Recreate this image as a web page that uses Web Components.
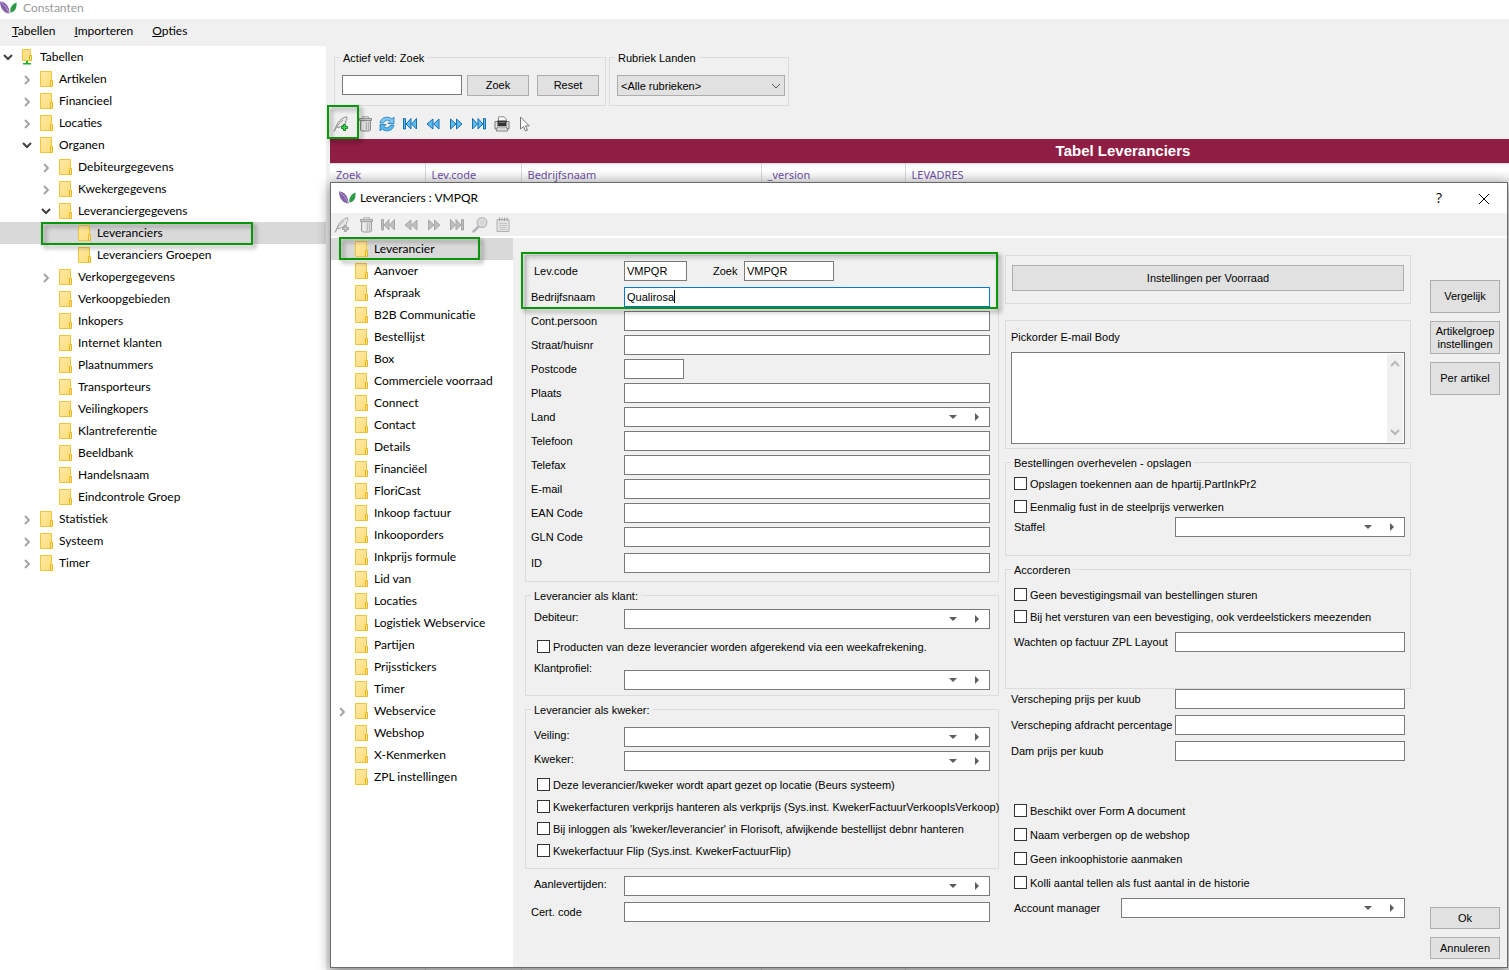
<!DOCTYPE html>
<html lang="nl">
<head>
<meta charset="utf-8">
<title>Constanten</title>
<style>
  html, body { margin: 0; height: 100%; }
  body {
    overflow: hidden;
    color: #000;
    background: #f0f0f0;
    --ui-font: Lato, "Open Sans", sans-serif;
    --form-font: "Liberation Sans", Arial, sans-serif;
    font: 12px/16px var(--ui-font);
  }
</style>
</head>
<body>
<constants-app></constants-app>

<script>
const icons = {
  logo: `<svg width="17" height="14" viewBox="0 0 17 14"><path d="M0 .5C5 .5 9.500 5 9.500 12.500C4 12.500 0 7 0 .5Z" fill="#8561a8"/><path d="M.5 1C5 4 7.500 8 9 12" stroke="#b79fd0" fill="none"/><path d="M16.500 1.500C12 3 9.500 7 10.500 11.500C15 11 17 7 16.500 1.500Z" fill="#2f9a48"/></svg>`,
  folder: `<svg width="14" height="18" viewBox="0 0 14 18"><defs><linearGradient id="f" x2="1" y2="1"><stop stop-color="#ffe9a6"/><stop offset="1" stop-color="#fddd78"/></linearGradient></defs><path d="M.5 1.500H11.500V16.500H.5Z" fill="url(#f)" stroke="#efc63a"/><path d="M10.500 10.500H12.500V16.500H10.500Z" fill="#ffe48f" stroke="#e6b91e"/></svg>`,
  root: `<svg width="14" height="18" viewBox="0 0 14 18"><path d="M1.500 1.500H9.500V12.500H1.500Z" fill="#fee08a" stroke="#efc63a"/><path d="M8.500 7.500H10.500V12.500H8.500Z" fill="#ffe48f" stroke="#e6b91e"/><path d="M5 13H7V15H10V16.500H2V15H5Z" fill="#12b32b"/></svg>`,
  right: `<svg width="10" height="12" viewBox="0 0 10 12"><path d="M3 3L7 7L3 11" stroke="#a0a0a0" stroke-width="1.800" fill="none"/></svg>`,
  down: `<svg width="10" height="12" viewBox="0 0 10 12"><path d="M1 4L5 8L9 4" stroke="#404040" stroke-width="2" fill="none"/></svg>`,
  quill: `<path d="M1 15.500L3 11C4 7 8 2 13.500 .8C14.500 3 13.500 4.500 12.500 5C13.500 6 12 8 10.500 8.500C9 10.500 6 11.500 4 11.500" fill="#e6e6e6" stroke="#8b8b8b"/><path d="M2 14.500C3 11 6 7 10 4" stroke="#9a9a9a" fill="none"/><path d="M10.500 8.500H12.500V10.500H14.500V12.500H12.500V14.500H10.500V12.500H8.500V10.500H10.500Z" fill="var(--plus)" stroke="var(--plus-edge)"/>`,
  trash: `<path d="M4.500 4.500H14.500V14C14.500 15.500 4.500 15.500 4.500 14Z" fill="#d6d6d6" stroke="#8a8a8a"/><path d="M6.500 6V14M8 6V14" stroke="#f5f5f5"/><path d="M10.500 6V14M12.500 6V14" stroke="#b0b0b0"/><path d="M3.500 2.500H15.500V4.500H3.500Z" fill="#c6c6c6" stroke="#8a8a8a"/><path d="M6.500 .8H12.500V2.500H6.500Z" fill="#eee" stroke="#9a9a9a"/>`,
  refresh: `<path d="M1 7C1.500 3 5 1 8.500 1.200C10.500 1.300 12 2.200 13 3L15 1V7.500H9L11 5.300C9 3.500 6 4 4.500 7Z" fill="#7cc8f3" stroke="#1e79b8" stroke-width=".8"/><path d="M15 9C14.500 13 11 15 7.500 14.800C5.500 14.700 4 13.800 3 13L1 15V8.500H7L5 10.700C7 12.500 10 12 11.500 9Z" fill="#58b7ee" stroke="#1e79b8" stroke-width=".8"/>`,
  first: `<path class="n" d="M1.500 2.500H3.500V13H1.500ZM9 2.500V13L4 8ZM14.500 2.500V13L9.500 8Z"/>`,
  prev: `<path class="n" d="M8 3V13L2 8ZM14 3V13L8.500 8Z"/>`,
  next: `<path class="n" d="M8 8L2.500 3V13ZM14 8L8.500 3V13Z"/>`,
  last: `<path class="n" d="M14.500 2.500H12.500V13H14.500ZM7 2.500V13L12 8ZM1.500 2.500V13L6.500 8Z"/>`,
  print: `<path d="M4.500 5V.8H10L12.500 3V6" fill="#fff" stroke="#888"/><path d="M1 5.500H15V13H1Z" fill="#dedede" stroke="#777"/><path d="M3.500 4.500H12.500V10H3.500Z" fill="#333"/><path d="M5 6.500H11" stroke="#777"/><path d="M3.500 11H12.500L13.500 15H2.500Z" fill="#fff" stroke="#777"/><path d="M4.500 13H11.500" stroke="#aaa"/>`,
  pointer: `<path d="M3.500 1V13L6.500 10.500L8.500 15L10.500 14L8.500 9.800H12.200Z" fill="#fff" stroke="#777"/>`,
  lens: `<path d="M7 9L1.500 14.500" stroke="#a8a8a8" stroke-width="2.500" stroke-linecap="round"/><circle cx="10" cy="5.500" r="4.800" fill="#dcdcdc" stroke="#b0b0b0" stroke-width="1.400"/><circle cx="10" cy="5.500" r="2.600" fill="#cfcfcf"/>`,
  notes: `<path d="M2 2.500H14V14.500H2Z" fill="#e2e2e2" stroke="#a2a2a2"/><path d="M4.500 .5V4M7 .5V4M9.500 .5V4M12 .5V4" stroke="#8f8f8f"/><path d="M4 6.500H12M4 8.500H12M4 10.500H12M4 12.500H12" stroke="#bcbcbc"/>`
};

/* Base class: clones one stylesheet + markup into an open shadow root. */
class Part extends HTMLElement {
  connectedCallback() {
    if (this.shadowRoot) return;
    this.attachShadow({ mode: "open" });
    const t = document.createElement("template");
    t.innerHTML = `<style>*{box-sizing:border-box}${this.styles()}</style>${this.markup()}`;
    this.shadowRoot.append(t.content.cloneNode(true));
  }
  a(name) { return (this.getAttribute(name) || "").replace(/</g, "&lt;"); }
  styles() { return ":host{display:block}"; }
  markup() { return "<slot></slot>"; }
}

customElements.define("push-button", class extends Part {
  styles() { return `
    :host { display: block; height: 21px; }
    button { width: 100%; height: 100%; padding: 0 4px; border: 1px solid #adadad; background: #e1e1e1;
      color: #000; font: 11px/13px var(--form-font); }`; }
  markup() { return `<button type="button"><slot></slot></button>`; }
});

customElements.define("tool-button", class extends Part {
  styles() { return `
    :host { display: block; --plus: #3fd455; --plus-edge: #118a26; --nav: #5cbcf2; --nav-edge: #176fae; }
    :host([off]) { --plus: #bdbdbd; --plus-edge: #909090; --nav: #b4b4b4; --nav-edge: #969696; }
    :host([off]) svg { opacity: .8; }
    button { display: block; width: 16px; height: 16px; padding: 0; border: 0; background: none; }
    svg { display: block; }
    .n { fill: var(--nav); stroke: var(--nav-edge); stroke-width: 1; }`; }
  markup() { return `<button type="button" aria-label="${this.a("icon")}"><svg width="16" height="16" viewBox="0 0 16 16">${icons[this.a("icon")]}</svg></button>`; }
});

customElements.define("tool-bar", class extends Part {
  styles() { return `:host { display: flex; gap: 7px; }`; }
});

/* Green annotation frame laid over the part it points at. */
customElements.define("call-out", class extends Part {
  styles() { return `
    :host { position: absolute; z-index: 2; border: 2px solid #0a960a; pointer-events: none;
      box-sizing: border-box; filter: drop-shadow(3px 3px 2px rgba(0,0,0,.4)); }`; }
  markup() { return ""; }
});

customElements.define("title-bar", class extends Part {
  styles() { return `
    :host { display: flex; align-items: center; background: #fff; flex: none; }
    svg { display: block; flex: none; }
    h1 { flex: 1; margin: 0; font: 12px/16px var(--ui-font); }`; }
  markup() { return `${icons.logo}<h1>${this.a("label")}</h1><slot></slot>`; }
});

customElements.define("menu-bar", class extends Part {
  styles() { return `
    :host { display: flex; gap: 19px; padding: 4px 12px 7px; background: #f0f0f0; align-items: center; flex: none; }
    button { padding: 0; border: 0; background: none; color: #000; font: 12px/16px var(--ui-font); }`; }
  markup() { return this.a("items").split(",").map(i => `<button type="button"><u>${i[0]}</u>${i.slice(1)}</button>`).join(""); }
});

customElements.define("tree-node", class extends Part {
  styles() {
    let depth = 0;
    for (let p = this.parentElement; p && p.localName === "tree-node"; p = p.parentElement) depth++;
    return `
    :host { display: block; }
    .row { position: relative; display: flex; align-items: center; height: 22px; padding-left: calc(var(--tree-start) + ${depth * 19}px); }
    :host([selected]) .row { background: #d9d9d9; }
    .mark { width: 18px; height: 12px; flex: none; }
    .mark svg, .icon svg { display: block; }
    .icon { width: 19px; flex: none; }`; }
  markup() {
    const mark = this.hasAttribute("open") ? icons.down : this.hasAttribute("closed") ? icons.right : "";
    return `<div class="row"><span class="mark">${mark}</span><span class="icon">${this.hasAttribute("root") ? icons.root : icons.folder}</span><span>${this.a("label")}</span><slot name="frame"></slot></div><slot></slot>`;
  }
});

customElements.define("tree-view", class extends Part {
  styles() { return `:host { display: block; background: #fff; flex: none; }`; }
});

customElements.define("group-box", class extends Part {
  styles() { return `
    :host { display: block; }
    fieldset { margin: 0; min-width: 0; padding: var(--pad); border: 1px solid #dcdcdc; }
    legend { height: 15px; margin-left: var(--legend-start, 0); padding: 0 3px; font: 11px/17px var(--form-font); }`; }
  markup() { return `<fieldset>${this.a("label") ? `<legend>${this.a("label")}</legend>` : ""}<slot></slot></fieldset>`; }
});

const fieldStyles = `
  :host { display: grid; grid-template-columns: var(--label-width, 93px) minmax(0, 1fr); font: 11px/16px var(--form-font); }
  label { align-self: center; white-space: nowrap; }
  :host([inset]) label { padding-left: 3px; }
  :host([raised]) label { align-self: start; }
  :host([dropped]) label { align-self: start; }
  :host([dropped]) .box { margin-top: 10px; }
  .box { display: flex; height: 20px; border: 1px solid #7a7a7a; background: #fff; }
  input { flex: 1; min-width: 0; width: 100%; padding: 0 2px; border: 0; outline: 0; background: none; color: #000; font: 11px/16px var(--form-font); }
  .box button { width: 24px; padding: 0; border: 0; background: none; display: grid; place-items: center; }`;

customElements.define("text-field", class extends Part {
  styles() { return fieldStyles + `
    :host([active]) .box { border-color: #0078d7; }
    :host([active]) input { background: linear-gradient(#000, #000) 49px 2px / 1px 13px no-repeat; }`; }
  markup() { return `<label for="i">${this.a("label")}</label><div class="box"><input id="i" type="text" value="${this.a("value")}"></div>`; }
});

customElements.define("lookup-field", class extends Part {
  styles() { return fieldStyles; }
  markup() { return `<label for="i">${this.a("label")}</label><div class="box"><input id="i" type="text">
    <button type="button" aria-label="Lijst"><svg width="8" height="4"><path d="M0 0H8L4 4Z" fill="#5c5c5c"/></svg></button><button type="button" aria-label="Open"><svg width="4" height="8"><path d="M0 0L4 4L0 8Z" fill="#5c5c5c"/></svg></button></div>`; }
});

customElements.define("check-field", class extends Part {
  styles() { return `
    :host { display: block; height: 15px; }
    label { display: flex; align-items: center; gap: 3px; height: 15px; font: 11px/15px var(--form-font); white-space: nowrap; }
    span { padding-top: 2px; }
    input { appearance: none; flex: none; width: 13px; height: 13px; margin: 0; border: 1px solid #333; background: #fff; }`; }
  markup() { return `<label><input type="checkbox"><span>${this.a("label")}</span></label>`; }
});

customElements.define("memo-field", class extends Part {
  styles() { return `
    :host { display: block; font: 11px/16px var(--form-font); }
    .box { display: flex; height: 92px; margin-top: 7px; border: 1px solid #7a7a7a; background: #fff; }
    label { display: block; }
    textarea { flex: 1; min-width: 0; border: 0; outline: 0; resize: none; background: none; overflow: hidden; font: 11px/16px var(--form-font); }
    .bar { width: 16px; margin: 1px; padding: 6px 0; background: #f0f0f0; display: flex; flex-direction: column; align-items: center; justify-content: space-between; }
    svg { display: block; }
    path { fill: none; stroke: #b8b8b8; stroke-width: 2; }`; }
  markup() { return `<label for="m">${this.a("label")}</label><div class="box"><textarea id="m"></textarea>
    <div class="bar"><svg width="10" height="7"><path d="M1 6L5 2L9 6"/></svg><svg width="10" height="7"><path d="M1 1L5 5L9 1"/></svg></div></div>`; }
});

customElements.define("search-panel", class extends Part {
  styles() { return `
    :host { display: flex; gap: 3px; padding: 4px 8px 0; }
    group-box { --pad: 10px 6px 9px 7px; --legend-start: -2px; }
    group-box.section { --pad: 10px 3px 9px 7px; }
    .row { display: flex; }
    .query { width: 120px; height: 20px; padding: 0 2px; border: 1px solid #7a7a7a; background: #fff; font: 11px/16px var(--form-font); }
    push-button { width: 62px; margin-left: 5px; }
    push-button + push-button { margin-left: 8px; }
    .pick { position: relative; }
    select { appearance: none; display: block; width: 168px; height: 21px; padding: 0 3px; border: 1px solid #adadad; border-radius: 0; background: #e1e1e1; color: #000; font: 11px/16px var(--form-font); }
    .pick svg { position: absolute; right: 4px; top: 8px; pointer-events: none; }`; }
  markup() { return `
    <group-box label="Actief veld: Zoek"><div class="row"><input class="query" type="text" aria-label="Actief veld: Zoek"><push-button>Zoek</push-button><push-button>Reset</push-button></div></group-box>
    <group-box class="section" label="Rubriek Landen"><div class="pick"><select aria-label="Rubriek Landen"><option>&lt;Alle rubrieken&gt;</option></select><svg width="10" height="6"><path d="M1 1L5 5L9 1" fill="none" stroke="#555"/></svg></div></group-box>`; }
});

customElements.define("data-grid", class extends Part {
  styles() { return `
    :host { display: block; flex: 1; overflow: hidden; background: #e4e4e4; }
    table { width: calc(100% + 407px); height: 100%; border-collapse: collapse; table-layout: fixed; }
    caption { height: 24px; background: #8f1d44; color: #fff; font: bold 15px/24px var(--form-font); }
    tr.head { height: 19px; }
    th { padding: 3px 6px 0; border-top: 1px solid #dcdcdc; border-right: 1px solid #d4d4d4; background: linear-gradient(#fff 30%, #e6e6e6); color: #6b4fa3; font: 11px/15px "Noto Sans", sans-serif; text-align: left; }
    td { padding: 0; border-right: 1px solid #ccc; }`; }
  markup() { return `<table><caption>Tabel Leveranciers</caption>
    <colgroup><col style="width:95px"><col style="width:96px"><col style="width:240px"><col style="width:144px"><col></colgroup>
    <thead><tr class="head"><th>Zoek</th><th>Lev.code</th><th>Bedrijfsnaam</th><th>_version</th><th>LEVADRES</th></tr></thead>
    <tbody><tr><td></td><td></td><td></td><td></td><td></td></tr></tbody></table>`; }
});

customElements.define("supplier-form", class extends Part {
  styles() { return `
    :host { position: relative; display: grid; grid-template-columns: minmax(0, 474fr) minmax(0, 412fr) 89px; padding: 17px 7px 8px 12px; flex: 1; min-width: 0; }
    .col { display: flex; flex-direction: column; min-width: 0; }
    .stack { display: flex; flex-direction: column; gap: 4px; }
    .pair { display: flex; margin-bottom: 2px; }
    .pair .code { width: 156px; }
    .pair .find { width: 121px; margin-left: 26px; --label-width: 31px; }
    .short { width: 153px; }
    .late { margin-top: 2px; }
    .own { --pad: 5px 8px 8px 5px; }
    .client { --pad: 6px 8px 5px 5px; margin-top: 6px; }
    .grower { --pad: 10px 8px 10px 5px; margin-top: 6px; }
    .left check-field { margin-left: 6px; }
    .client check-field { margin: 10px 0 6px 6px; }
    .checks { display: flex; flex-direction: column; gap: 7px; margin-top: 6px; }
    .rest { display: flex; flex-direction: column; gap: 6px; padding: 7px 9px 0 6px; }
    .mid { margin-left: 6px; --label-width: 164px; }
    .mid check-field { margin-left: 3px; }
    .stock { --pad: 9px 6px 12px; }
    .stock push-button { height: 26px; }
    .mail { --pad: 8px 5px 4px; margin-top: 16px; }
    .extra { --pad: 6px 5px 18px; margin-top: 6px; }
    .extra .checks { gap: 8px; margin: 0 0 3px; }
    .agree { --pad: 10px 5px 36px; margin-top: 6px; }
    .agree .checks { margin: 0 0 8px; }
    .costs { display: flex; flex-direction: column; gap: 6px; padding: 0 6px; }
    .flags { display: flex; flex-direction: column; gap: 9px; padding: 42px 6px 8px; }
    .manager { margin: 0 6px; --label-width: 110px; }
    .side { margin-left: 19px; padding-top: 25px; gap: 8px; }
    .side push-button { height: 33px; }
    .side .close { height: 22px; }
    .side .ok { margin-top: auto; }
    call-out { left: 8px; top: 14px; height: 57px; width: calc((100% - 108px) * 474 / 886 + 3px); }`; }
  markup() { return `
    <div class="col left">
      <group-box class="own"><div class="stack">
        <div class="pair"><text-field class="code" inset label="Lev.code" value="VMPQR"></text-field><text-field class="find" label="Zoek" value="VMPQR"></text-field></div>
        <text-field active label="Bedrijfsnaam" value="Qualirosa"></text-field>
        <text-field label="Cont.persoon"></text-field>
        <text-field label="Straat/huisnr"></text-field>
        <text-field class="short" label="Postcode"></text-field>
        <text-field label="Plaats"></text-field>
        <lookup-field label="Land"></lookup-field>
        <text-field label="Telefoon"></text-field>
        <text-field label="Telefax"></text-field>
        <text-field label="E-mail"></text-field>
        <text-field label="EAN Code"></text-field>
        <text-field label="GLN Code"></text-field>
        <text-field class="late" label="ID"></text-field>
      </div></group-box>
      <group-box class="client" label="Leverancier als klant:">
        <lookup-field inset raised label="Debiteur:"></lookup-field>
        <check-field label="Producten van deze leverancier worden afgerekend via een weekafrekening."></check-field>
        <lookup-field inset dropped label="Klantprofiel:"></lookup-field>
      </group-box>
      <group-box class="grower" label="Leverancier als kweker:">
        <div class="stack">
          <lookup-field inset raised label="Veiling:"></lookup-field>
          <lookup-field inset raised label="Kweker:"></lookup-field>
        </div>
        <div class="checks">
          <check-field label="Deze leverancier/kweker wordt apart gezet op locatie (Beurs systeem)"></check-field>
          <check-field label="Kwekerfacturen verkprijs hanteren als verkprijs (Sys.inst. KwekerFactuurVerkoopIsVerkoop)"></check-field>
          <check-field label="Bij inloggen als 'kweker/leverancier' in Florisoft, afwijkende bestellijst debnr hanteren"></check-field>
          <check-field label="Kwekerfactuur Flip (Sys.inst. KwekerFactuurFlip)"></check-field>
        </div>
      </group-box>
      <div class="rest">
        <lookup-field inset raised label="Aanlevertijden:"></lookup-field>
        <text-field label="Cert. code"></text-field>
      </div>
    </div>
    <div class="col mid">
      <group-box class="stock"><push-button>Instellingen per Voorraad</push-button></group-box>
      <group-box class="mail"><memo-field label="Pickorder E-mail Body"></memo-field></group-box>
      <group-box class="extra" label="Bestellingen overhevelen - opslagen">
        <div class="checks">
          <check-field label="Opslagen toekennen aan de hpartij.PartInkPr2"></check-field>
          <check-field label="Eenmalig fust in de steelprijs verwerken"></check-field>
        </div>
        <lookup-field inset label="Staffel"></lookup-field>
      </group-box>
      <group-box class="agree" label="Accorderen">
        <div class="checks">
          <check-field label="Geen bevestigingsmail van bestellingen sturen"></check-field>
          <check-field label="Bij het versturen van een bevestiging, ook verdeelstickers meezenden"></check-field>
        </div>
        <text-field inset label="Wachten op factuur ZPL Layout"></text-field>
      </group-box>
      <div class="costs">
        <text-field label="Verscheping prijs per kuub"></text-field>
        <text-field label="Verscheping afdracht percentage"></text-field>
        <text-field label="Dam prijs per kuub"></text-field>
      </div>
      <div class="flags">
        <check-field label="Beschikt over Form A document"></check-field>
        <check-field label="Naam verbergen op de webshop"></check-field>
        <check-field label="Geen inkoophistorie aanmaken"></check-field>
        <check-field label="Kolli aantal tellen als fust aantal in de historie"></check-field>
      </div>
      <lookup-field class="manager" inset label="Account manager"></lookup-field>
    </div>
    <div class="col side">
      <push-button>Vergelijk</push-button>
      <push-button>Artikelgroep instellingen</push-button>
      <push-button>Per artikel</push-button>
      <push-button class="close ok">Ok</push-button>
      <push-button class="close">Annuleren</push-button>
    </div>
    <call-out></call-out>`; }
});

const leaves = names => names.split(",").map(n => `<tree-node label="${n}"></tree-node>`).join("");

customElements.define("supplier-dialog", class extends Part {
  styles() { return `
    :host { display: flex; flex-direction: column; box-sizing: border-box; background: #f0f0f0; border: 1px solid #6b6b6b; box-shadow: 0 3px 12px rgba(0,0,0,.45); }
    title-bar { height: 30px; gap: 4px; padding: 0 16px 0 8px; }
    .win { display: block; padding: 0; border: 0; background: none; font: 14px/16px "Open Sans", sans-serif; width: 14px; height: 16px; }
    .win svg { display: block; margin: 1px 0 0 1px; }
    .win + .win { margin-left: 27px; }
    tool-bar { padding: 4px 3px 3px; border-bottom: 2px solid #fff; }
    .body { display: flex; flex: 1; min-height: 0; }
    tree-view { width: 182px; --tree-start: 6px; }
    call-out { left: 8px; top: -1px; width: 141px; height: 23px; }`; }
  markup() { return `
    <title-bar label="Leveranciers : VMPQR"><button class="win" type="button">?</button><button class="win" type="button" aria-label="Sluiten"><svg width="12" height="12"><path d="M1 1L11 11M11 1L1 11" stroke="#000" fill="none"/></svg></button></title-bar>
    <tool-bar>${["quill", "trash", "first", "prev", "next", "last", "lens", "notes"].map(i => `<tool-button off icon="${i}"></tool-button>`).join("")}</tool-bar>
    <div class="body">
      <tree-view>
        <tree-node selected label="Leverancier"><call-out slot="frame"></call-out></tree-node>
        ${leaves("Aanvoer,Afspraak,B2B Communicatie,Bestellijst,Box,Commerciele voorraad,Connect,Contact,Details,Financiëel,FloriCast,Inkoop factuur,Inkooporders,Inkprijs formule,Lid van,Locaties,Logistiek Webservice,Partijen,Prijsstickers,Timer")}
        <tree-node closed label="Webservice"></tree-node>
        ${leaves("Webshop,X-Kenmerken,ZPL instellingen")}
      </tree-view>
      <supplier-form></supplier-form>
    </div>`; }
});

customElements.define("constants-app", class extends Part {
  styles() { return `
    :host { position: relative; display: flex; flex-direction: column; height: 100vh; overflow: hidden; }
    .main-title { height: 19px; padding: 0 0 3px; gap: 6px; color: #999; box-sizing: border-box; }
    .body { display: flex; flex: 1; min-height: 0; }
    .nav { width: 326px; --tree-start: 3px; }
    .nav call-out { left: 41px; top: 0; width: 212px; height: 23px; }
    main { position: relative; display: flex; flex-direction: column; flex: 1; min-width: 0; padding-left: 4px; }
    search-panel { padding-left: 4px; }
    .tools { padding: 10px 3px 7px; }
    main > call-out { left: 1px; top: 59px; width: 32px; height: 34px; }
    supplier-dialog { position: absolute; left: 4px; right: 1px; top: 136px; bottom: 2px; z-index: 3; }`; }
  markup() { return `
    <title-bar class="main-title" label="Constanten"></title-bar>
    <menu-bar items="Tabellen,Importeren,Opties"></menu-bar>
    <div class="body">
      <tree-view class="nav">
        <tree-node root open label="Tabellen">
          <tree-node closed label="Artikelen"></tree-node>
          <tree-node closed label="Financieel"></tree-node>
          <tree-node closed label="Locaties"></tree-node>
          <tree-node open label="Organen">
            <tree-node closed label="Debiteurgegevens"></tree-node>
            <tree-node closed label="Kwekergegevens"></tree-node>
            <tree-node open label="Leveranciergegevens">
              <tree-node selected label="Leveranciers"><call-out slot="frame"></call-out></tree-node>
              <tree-node label="Leveranciers Groepen"></tree-node>
            </tree-node>
            <tree-node closed label="Verkopergegevens"></tree-node>
            ${leaves("Verkoopgebieden,Inkopers,Internet klanten,Plaatnummers,Transporteurs,Veilingkopers,Klantreferentie,Beeldbank,Handelsnaam,Eindcontrole Groep")}
          </tree-node>
          <tree-node closed label="Statistiek"></tree-node>
          <tree-node closed label="Systeem"></tree-node>
          <tree-node closed label="Timer"></tree-node>
        </tree-node>
      </tree-view>
      <main>
        <search-panel></search-panel>
        <tool-bar class="tools">${["quill", "trash", "refresh", "first", "prev", "next", "last", "print", "pointer"].map(i => `<tool-button icon="${i}"></tool-button>`).join("")}</tool-bar>
        <data-grid></data-grid>
        <call-out></call-out>
        <supplier-dialog></supplier-dialog>
      </main>
    </div>`; }
});
</script>
</body>
</html>
